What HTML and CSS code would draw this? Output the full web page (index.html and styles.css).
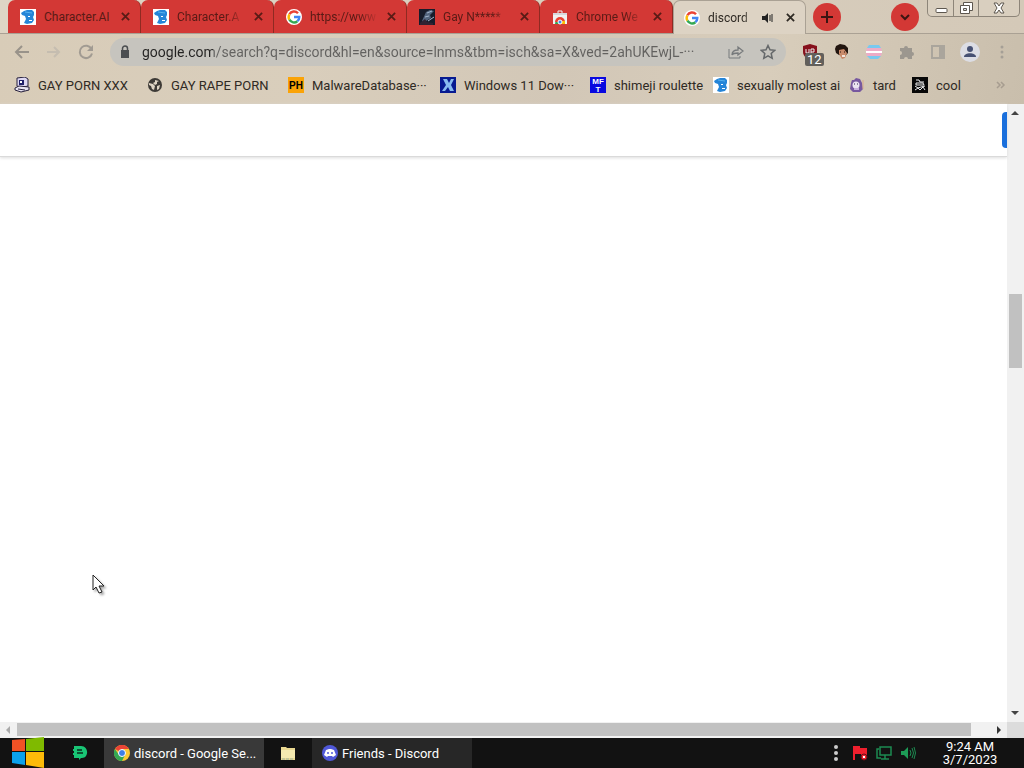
FILE: index.html
```html
<!doctype html>
<html lang="en">
	<head>
		<title>discord - Google Search</title>
		<meta charset="utf-8">
		<meta name="viewport" content="width=device-width">
		<link rel="stylesheet" href="styles.css">
	</head>
	<body>
		<!-- shared icons -->
		<svg class="defs" aria-hidden="true">
			<symbol id="close" viewBox="0 0 10 10"><path d="M1 1l8 8M9 1L1 9" stroke="currentColor" stroke-width="2" fill="none"/></symbol>
			<symbol id="google" viewBox="0 0 16 16">
				<circle cx="8" cy="8" r="8" fill="#fff"/>
				<g fill="none" stroke-width="2.4">
					<path d="M12 4.2A5.3 5.3 0 0 0 3.4 5.3" stroke="#ea4335"/>
					<path d="M3.4 5.3a5.3 5.3 0 0 0 0 5.4" stroke="#fbbc05"/>
					<path d="M3.4 10.7a5.3 5.3 0 0 0 8 1.5" stroke="#34a853"/>
					<path d="M11.4 12.2A5.3 5.3 0 0 0 13.3 8H8" stroke="#4285f4"/>
				</g>
			</symbol>
			<symbol id="beard" viewBox="0 0 16 16">
				<path d="M0 0h16v16H0z" fill="#fff"/>
				<path d="M1 4l3-2 3-1h5l2 2v3l-1 2 1 3-2 3-5 1-3-1 2-4-1-3-3-1z" fill="#2585d8"/>
				<path d="M8 7h2v1H8zM9 11h3v1H9z" fill="#fff"/>
				<path d="M5 3l7 1" stroke="#55b2ef"/>
			</symbol>
		</svg>

		<header class="browser">
			<nav class="tabs">
				<div class="tab"><svg class="icon"><use href="#beard"/></svg><span class="tab-title">Character.AI</span><button class="tab-close" aria-label="Close tab"><svg><use href="#close"/></svg></button></div>
				<div class="tab"><svg class="icon"><use href="#beard"/></svg><span class="tab-title">Character.A</span><button class="tab-close" aria-label="Close tab"><svg><use href="#close"/></svg></button></div>
				<div class="tab"><svg class="icon"><use href="#google"/></svg><span class="tab-title">https://www</span><button class="tab-close" aria-label="Close tab"><svg><use href="#close"/></svg></button></div>
				<div class="tab">
					<svg class="icon" viewBox="0 0 16 16"><path d="M0 0h16v16H0z" fill="#171c2b"/><path d="M3 12L7 3l4-2 4 1-4 4 1 3-5 3-3 3z" fill="#53657f"/><path d="M8 4l5-2M6 8l4-1M9 12l6-4" stroke="#a4b5cc"/><path d="M1 14l5-4 2 3 6 1v2H1z" fill="#302232"/></svg>
					<span class="tab-title">Gay N*****</span><button class="tab-close" aria-label="Close tab"><svg><use href="#close"/></svg></button>
				</div>
				<div class="tab">
					<svg class="icon" viewBox="0 0 16 16"><path d="M6 4V2h4v2" fill="none" stroke="#eee" stroke-width="1"/><path d="M1 4h14v11H1z" fill="#f1f1f1"/><path d="M1 4h14v2H1z" fill="#d8d8dc"/><path d="M3 15a5 5 0 0 1 10 0z" fill="#34a853"/><path d="M3 13a5 5 0 0 1 10 0z" fill="#ea4335"/><path d="M10 12h3v3h-4z" fill="#fbbc05"/><circle cx="8" cy="13" r="2" fill="#4285f4" stroke="#fff"/></svg>
					<span class="tab-title">Chrome We</span><button class="tab-close" aria-label="Close tab"><svg><use href="#close"/></svg></button>
				</div>
				<div class="tab tab-active">
					<svg class="icon"><use href="#google"/></svg><span class="tab-title">discord</span>
					<svg class="audio" viewBox="0 0 12 12"><path d="M0 4h3l3-3v10L3 8H0z" fill="#222"/><path d="M8 3v6M10 2v8" stroke="#222"/></svg>
					<button class="tab-close" aria-label="Close tab"><svg><use href="#close"/></svg></button>
				</div>
				<button class="round" aria-label="New tab"><svg viewBox="0 0 14 14"><path d="M7 1v12M1 7h12" stroke="#3c1512" stroke-width="2"/></svg></button>
				<button class="round tab-search" aria-label="Search tabs"><svg viewBox="0 0 14 14"><path d="M3 5l4 4 4-4" fill="none" stroke="#3c1512" stroke-width="2"/></svg></button>
				<div class="window-buttons">
					<button aria-label="Minimize"><svg viewBox="0 0 16 16"><rect x="3" y="8.500" width="11" height="4" rx="1" fill="#fff" stroke="#5d574f"/></svg></button>
					<button aria-label="Restore"><svg viewBox="0 0 16 16"><path d="M5.500 2.500h9v8h-9z" fill="#fff" stroke="#5d574f"/><path d="M2.500 5.500h9v8h-9z" fill="#fff" stroke="#5d574f"/><path d="M5.500 8.500h3v2h-3z" fill="#ddd" stroke="#5d574f"/></svg></button>
					<button aria-label="Close window"><svg viewBox="0 0 16 16"><path d="M3 3h3l2 3 2-3h3l-3 5 3 5h-3l-2-3-2 3H3l3-5z" fill="#fff" stroke="#5d574f"/></svg></button>
				</div>
			</nav>

			<div class="toolbar">
				<div class="history">
					<button aria-label="Back"><svg viewBox="0 0 16 16"><path d="M15 8H2M8 2L2 8l6 6" fill="none" stroke="#99938a" stroke-width="2"/></svg></button>
					<button aria-label="Forward"><svg viewBox="0 0 16 16"><path d="M1 8h12M8 3l5 5-5 5" fill="none" stroke="#c5bdb0" stroke-width="2"/></svg></button>
					<button aria-label="Reload"><svg viewBox="0 0 16 16"><path d="M13.500 5A6.200 6.200 0 1 0 14 9.500" fill="none" stroke="#a19b92" stroke-width="2"/><path d="M15 1v6H9z" fill="#a19b92"/></svg></button>
				</div>
				<div class="omnibox">
					<svg class="lock" viewBox="0 0 10 14"><path d="M1 5h8v8H1z" fill="#4b4e51"/><path d="M2.500 6V3.500a2.500 2.500 0 0 1 5 0V6" fill="none" stroke="#4b4e51" stroke-width="1.500"/></svg>
					<input type="text" class="url" aria-label="Address" value="google.com/search?q=discord&amp;hl=en&amp;source=lnms&amp;tbm=isch&amp;sa=X&amp;ved=2ahUKEwjL-···">
					<button aria-label="Share"><svg viewBox="0 0 16 16"><path d="M1 5v9h11v-2" fill="none" stroke="#777a7c"/><path d="M4 11c0-4 3-5 6-5V3l5 4-5 4V9c-3 0-5 0-6 2z" fill="none" stroke="#777a7c" stroke-width="1.300"/></svg></button>
					<button aria-label="Bookmark"><svg viewBox="0 0 16 16"><path d="M8 1.500l2 4.300 4.700.500-3.500 3.200 1 4.800L8 11.900l-4.200 2.400 1-4.800-3.500-3.200 4.700-.500z" fill="none" stroke="#65686a" stroke-width="1.500"/></svg></button>
				</div>
				<div class="extensions">
					<button class="blocker" aria-label="uBlock"><svg viewBox="0 0 16 16"><path d="M8 0l7 2v6c0 4-4 7-7 8-3-1-7-4-7-8V2z" fill="#87111c"/><path d="M4 5v4h3V5M9 10V5h3v3H9" fill="none" stroke="#eee"/></svg><span class="badge">12</span></button>
					<button aria-label="Extension"><svg viewBox="0 0 16 16"><path d="M1 5l1-3 4-2 5 1 3 3v5l-3 3-6-1-3-2z" fill="#22150f"/><path d="M5 6l5-1 3 4-2 5-3 1-3-5z" fill="#c98a6a"/><path d="M8 12h3" stroke="#fff" stroke-width="1.500"/><path d="M6 8h1M10 8h1" stroke="#26150f"/></svg></button>
					<button aria-label="Extension"><svg viewBox="0 0 16 16"><path d="M3 1h10l2 3H1z" fill="#79c9ef"/><path d="M1 4h14l1 3H0z" fill="#edabc6"/><path d="M0 7h16v2H0z" fill="#fff"/><path d="M0 9h16l-1 3H1z" fill="#edabc6"/><path d="M1 12h14l-3 3H4z" fill="#79c9ef"/></svg></button>
					<button aria-label="Extensions"><svg viewBox="0 0 16 16"><path d="M2 4h4a2 2 0 0 1 4 0h4v4a2 2 0 0 1 0 4v3h-4a2 2 0 0 0-4 0H2v-4a2 2 0 0 0 0-4z" fill="#9c978f"/></svg></button>
					<button aria-label="Side panel"><svg viewBox="0 0 16 16"><path d="M2 2h12v12H2z" fill="none" stroke="#aaa59c" stroke-width="2"/><path d="M9 2h5v12H9z" fill="#aaa59c"/></svg></button>
					<button class="profile" aria-label="Profile"><svg viewBox="0 0 16 16"><circle cx="8" cy="5" r="3" fill="#475173"/><path d="M2 13c0-5 12-5 12 0z" fill="#475173"/></svg></button>
					<button aria-label="Menu"><svg viewBox="0 0 16 16" fill="#a59f96"><circle cx="8" cy="3" r="1.500"/><circle cx="8" cy="8" r="1.500"/><circle cx="8" cy="13" r="1.500"/></svg></button>
				</div>
			</div>

			<nav class="bookmarks">
				<a href="#"><svg class="icon" viewBox="0 0 16 16"><path d="M3 1l8-1 3 2v7l-8 2-3-2z" fill="#ddd7f2" stroke="#26203c"/><path d="M5 3h5v5H5z" fill="#20206a"/><path d="M6 4h2v2H6z" fill="#fff"/><path d="M1 11l4-2 10 1v3l-8 2-6-2z" fill="#e8e4f2" stroke="#26203c"/><path d="M4 12l7 1" stroke="#26203c"/></svg>GAY PORN XXX</a>
				<a href="#"><svg class="icon" viewBox="0 0 16 16"><circle cx="8" cy="8" r="7" fill="#3d3a36"/><path d="M2 6l4 1 2 2-1 4-2-1-1-3-2-1zM8 3l4 1-2 1v2l-2 1-2-2 2-1zM10 9l3-1-1 4-2 1z" fill="#ddd3c3"/></svg>GAY RAPE PORN</a>
				<a href="#"><svg class="icon" viewBox="0 0 16 16"><path d="M0 0h16v16H0z" fill="#faa307"/><text class="ph" x="8" y="12" text-anchor="middle">PH</text></svg>MalwareDatabase···</a>
				<a href="#"><svg class="icon" viewBox="0 0 16 16"><path d="M0 0h16v16H0z" fill="#071a91"/><path d="M3 2h4l2 4 2-4h3l-3 6 3 6h-4l-2-4-3 4H2l4-6z" fill="#87baf0"/></svg>Windows 11 Dow···</a>
				<a href="#"><svg class="icon" viewBox="0 0 16 16"><path d="M0 0h16v16H0z" fill="#0808e0"/><text class="mft" x="8" y="7" text-anchor="middle">MF</text><text class="mft" x="8" y="15" text-anchor="middle">T</text></svg>shimeji roulette</a>
				<a href="#"><svg class="icon"><use href="#beard"/></svg>sexually molest ai</a>
				<a href="#"><svg class="icon" viewBox="0 0 16 16"><path d="M3 3l2 0 2-2 4 1 2 4 1 6-3 3H4l-3-3 1-6z" fill="#77589f"/><circle cx="7" cy="8" r="3.500" fill="#ebe4f2"/><path d="M5 7h1M8 7h1" stroke="#35234d"/><path d="M5 12h5" stroke="#c8b0df" stroke-width="2"/><path d="M14 3v9" stroke="#d9aa88"/></svg>tard</a>
				<a href="#"><svg class="icon" viewBox="0 0 16 16"><path d="M0 0h16v16H0z" fill="#080808"/><path d="M4 3h3l1 2h4M4 6h7l1 2H4zM3 13l3-2 2 2 3-3 2 3M3 9l3 2 3-1 4-1" fill="none" stroke="#eee"/></svg>cool</a>
				<button class="more" aria-label="More bookmarks"><svg viewBox="0 0 10 10"><path d="M1 2l3 3-3 3M5 2l3 3-3 3" fill="none" stroke="#a79d90" stroke-width="1.500"/></svg></button>
			</nav>
		</header>

		<main class="viewport">
			<section class="page">
				<div class="search-header"><button class="sign-in" aria-label="Sign in"></button></div>
				<svg class="cursor" viewBox="0 0 14 20"><path d="M1 1v15l3-3 3 6 3-1-3-6h5z" fill="#fff" stroke="#222"/></svg>
			</section>
			<div class="scroll-y">
				<svg viewBox="0 0 17 17"><path d="M4 11l4-4 4 4z" fill="#444"/></svg>
				<div class="track-y"><div class="thumb-y"></div></div>
				<svg viewBox="0 0 17 17"><path d="M4 6l4 4 4-4z" fill="#444"/></svg>
			</div>
			<div class="scroll-x">
				<svg viewBox="0 0 17 17"><path d="M10 4L6 8l4 4z" fill="#aaa"/></svg>
				<div class="track-x"><div class="thumb-x"></div></div>
				<svg viewBox="0 0 17 17"><path d="M7 4l4 4-4 4z" fill="#333"/></svg>
			</div>
			<div class="scroll-corner"></div>
		</main>

		<footer class="taskbar">
			<button class="start" aria-label="Start"><svg viewBox="0 0 32 30"><path d="M0 2l13-1v12H0z" fill="#f05125"/><path d="M14 1l18-2v14H14z" fill="#7fba00"/><path d="M0 14h13v13L0 25z" fill="#0ba1ec"/><path d="M14 14h18v16l-18-3z" fill="#fdbb09"/></svg></button>
			<button class="task-small" aria-label="Notes"><svg class="icon" viewBox="0 0 16 16"><path d="M2 1h7c8 0 8 12 1 12H9l-2 2v-2H2v-3H1V8h1V6H1V4h1z" fill="#19c575"/><path d="M5 5h5M5 8h6" stroke="#082c1c" stroke-width="1.500"/></svg></button>
			<button class="task task-current">
				<svg class="icon" viewBox="0 0 16 16"><circle cx="8" cy="8" r="8" fill="#fcc934"/><path d="M8 8L1 4a8 8 0 0 1 14 0H8z" fill="#ea4335"/><path d="M1 4a8 8 0 0 0 7 12l3-6-6 0z" fill="#34a853"/><circle cx="8" cy="8" r="3.500" fill="#3d7ee8" stroke="#fff"/></svg>
				<span>discord - Google Se...</span>
			</button>
			<button class="task-small" aria-label="Files"><svg class="icon" viewBox="0 0 16 16"><path d="M1 2h5l1 1h8v12H1z" fill="#ead991"/><path d="M1 5h14v8H1z" fill="#f5eab1"/><path d="M2 14h12" stroke="#9cb2a1" stroke-dasharray="3 1"/></svg></button>
			<button class="task">
				<svg class="icon" viewBox="0 0 16 16"><circle cx="8" cy="8" r="8" fill="#5058d8"/><path d="M4 5l3-1h2l3 1 2 5-3 2-1-1H6l-1 1-3-2z" fill="#fff"/><circle cx="6" cy="8" r="1" fill="#5058d8"/><circle cx="10" cy="8" r="1" fill="#5058d8"/></svg>
				<span>Friends - Discord</span>
			</button>
			<div class="tray">
				<svg class="icon" viewBox="0 0 16 16" fill="#ccc"><circle cx="8" cy="2" r="2"/><circle cx="8" cy="8" r="2"/><circle cx="8" cy="14" r="2"/></svg>
				<svg class="icon" viewBox="0 0 16 16"><path d="M1 1h7v2h7v8H9V9H3v6H1z" fill="#ef1f2d"/><circle cx="12" cy="12" r="3" fill="#ef1f2d" stroke="#6a1118"/><path d="M11 11l2 2M13 11l-2 2" stroke="#fff"/></svg>
				<svg class="icon" viewBox="0 0 16 16"><path d="M4 2h11v8H4zM9 10v4M5 14h8M3 4H1v9h4" fill="none" stroke="#1d8b51" stroke-width="1.500"/></svg>
				<svg class="icon" viewBox="0 0 16 16"><path d="M1 6h3l4-4v12l-4-4H1z" fill="#1d9b56"/><path d="M10 5q2 3 0 6M12 3q3 5 0 10M14 2q3 6 0 12" fill="none" stroke="#1d8b51"/></svg>
			</div>
			<time class="clock" datetime="2023-03-07T09:24">9:24 AM<br>3/7/2023</time>
		</footer>
	</body>
</html>
```
FILE: styles.css
```css
* {
	box-sizing: border-box;
}
html, body {
	margin: 0;
	height: 100%;
}
body {
	display: flex;
	flex-direction: column;
	overflow: hidden;
	font-family: Roboto, "Liberation Sans", sans-serif;
	font-size: 13px;
	color: #2f2a24;
}
button {
	display: flex;
	align-items: center;
	justify-content: center;
	flex: none;
	padding: 0;
	border: 0;
	background: none;
	font: inherit;
	color: inherit;
}
svg {
	display: block;
	flex: none;
}
.defs {
	position: absolute;
	width: 0;
	height: 0;
}
.icon {
	width: 16px;
	height: 16px;
}

/* browser chrome */
.browser {
	flex: none;
	background: linear-gradient(100deg, #d8ccb8, #d9cebc 30%, #d2c7b7 55%, #d8cdbb 75%, #c9beac);
}
.tabs {
	display: flex;
	align-items: flex-start;
	height: 34px;
	padding-left: 8px;
	background: linear-gradient(90deg, #ded5c5, #d4c9b8);
	border-bottom: 1px solid #aaa194;
}
.tab {
	display: flex;
	align-items: center;
	flex: 0 1 133px;
	min-width: 0;
	height: 33px;
	padding: 0 9px 0 12px;
	background: #d33835;
	border-right: 1px solid #8f2a22;
	border-radius: 7px 7px 0 0;
	font-size: 12px;
	color: #591b16;
}
.tab-title {
	flex: 1;
	min-width: 0;
	margin-left: 8px;
	overflow: hidden;
	white-space: nowrap;
	-webkit-mask-image: linear-gradient(90deg, #000 70%, transparent);
	mask-image: linear-gradient(90deg, #000 70%, transparent);
}
.tab:first-child .tab-title {
	-webkit-mask-image: none;
	mask-image: none;
}
.tab-close {
	width: 12px;
	height: 16px;
	margin-left: 6px;
}
.tab-close svg {
	width: 9px;
	height: 9px;
}
.tab-active {
	height: 34px;
	padding-left: 10px;
	background: #ddd3c4;
	border: 1px solid #aaa194;
	border-bottom: 0;
	color: #2f2a24;
}
.audio {
	width: 12px;
	height: 12px;
	margin: 0 4px;
}
.round {
	width: 28px;
	height: 28px;
	margin: 3px 0 0 7px;
	border-radius: 50%;
	background: #d33835;
}
.round svg {
	width: 14px;
	height: 14px;
}
.tab-search {
	margin-left: auto;
}
.window-buttons {
	display: flex;
	margin: 0 4px 0 8px;
	border: 1px solid #8d8579;
	border-top: 0;
	border-radius: 0 0 5px 5px;
	background: #d9cfbf;
}
.window-buttons button {
	width: 25px;
	height: 16px;
}
.window-buttons button + button {
	border-left: 1px solid #8d8579;
}
.window-buttons button:last-child {
	width: 41px;
}
.window-buttons svg {
	width: 16px;
	height: 16px;
}
.toolbar {
	display: flex;
	align-items: center;
	height: 36px;
	padding: 0 14px;
}
.history {
	display: flex;
	gap: 16px;
}
.toolbar button svg {
	width: 16px;
	height: 16px;
}
.omnibox {
	display: flex;
	align-items: center;
	flex: 1;
	height: 28px;
	margin-left: 16px;
	padding: 0 10px;
	gap: 16px;
	border-radius: 14px;
	background: #c6c4be;
}
.lock {
	width: 10px;
	height: 14px;
	margin-right: -4px;
}
.url {
	flex: 1;
	min-width: 0;
	height: 24px;
	padding: 0;
	border: 0;
	outline: 0;
	font: inherit;
	font-size: 14px;
	/* host is darker than the path */
	color: transparent;
	background: linear-gradient(90deg, #242322 71px, #62615f 71px);
	-webkit-background-clip: text;
	background-clip: text;
}
.extensions {
	display: flex;
	gap: 16px;
	margin-left: 16px;
}
.extensions button {
	width: 16px;
	height: 20px;
}
.blocker {
	position: relative;
}
.badge {
	position: absolute;
	top: 11px;
	left: 3px;
	padding: 0 2px;
	border-radius: 2px;
	background: #625f5b;
	font-size: 13px;
	line-height: 13px;
	color: #fff;
}
.extensions .profile {
	width: 20px;
	margin: 0 -2px;
	border-radius: 50%;
	background: #dcdde4;
}
.bookmarks {
	display: grid;
	grid-template-columns: 133px 141px 152px 150px 123px 136px 63px 1fr auto;
	align-items: center;
	height: 34px;
	padding: 0 18px 4px 14px;
}
.bookmarks a {
	display: flex;
	align-items: center;
	gap: 8px;
	white-space: nowrap;
	color: inherit;
	text-decoration: none;
}
.more svg {
	width: 10px;
	height: 10px;
}
.ph {
	font: bold 10px "Liberation Sans", sans-serif;
}
.mft {
	font: bold 8px "Liberation Sans", sans-serif;
	fill: #fff;
}

/* page and its scrollbars */
.viewport {
	display: grid;
	grid-template: minmax(0, 1fr) 16px / minmax(0, 1fr) 17px;
	flex: 1;
	min-height: 0;
	background: #f1f1f1;
}
.page {
	position: relative;
	background: #fff;
}
.search-header {
	display: flex;
	align-items: center;
	justify-content: flex-end;
	height: 53px;
	border-bottom: 1px solid #dadada;
	box-shadow: 0 1px 3px #ddd;
}
.sign-in {
	width: 5px;
	height: 36px;
	border-radius: 4px 0 0 4px;
	background: #1a6fdc;
}
.cursor {
	position: absolute;
	left: 92px;
	top: 470px;
	width: 14px;
	height: 20px;
	filter: drop-shadow(2px 2px 1px #aaa);
}
.scroll-y, .scroll-x {
	display: flex;
}
.scroll-y {
	flex-direction: column;
}
.scroll-y svg, .scroll-x svg {
	width: 17px;
	height: 17px;
}
.track-y, .track-x {
	flex: 1;
}
.track-y {
	display: grid;
	grid-template-rows: 173fr 74fr 337fr;
	padding: 0 2px;
}
.thumb-y {
	grid-row: 2;
	background: #c1c1c1;
}
.track-x {
	padding: 1px 0 2px;
}
.thumb-x {
	width: 98%;
	height: 100%;
	background: #c1c1c1;
}
.scroll-corner {
	background: #dcdcdc;
}

/* taskbar */
.taskbar {
	display: flex;
	align-items: center;
	flex: none;
	height: 30px;
	background: #121212;
	color: #fff;
}
.start {
	width: 56px;
}
.start svg {
	width: 32px;
	height: 30px;
	overflow: visible;
}
.task-small {
	width: 48px;
	height: 30px;
}
.task {
	justify-content: flex-start;
	gap: 4px;
	width: 160px;
	height: 30px;
	padding-left: 10px;
	background: #272727;
	white-space: nowrap;
}
.task-current {
	background: #393939;
}
.tray {
	display: flex;
	gap: 8px;
	margin-left: auto;
}
.clock {
	width: 108px;
	font-size: 13px;
	line-height: 13px;
	text-align: center;
}
```
